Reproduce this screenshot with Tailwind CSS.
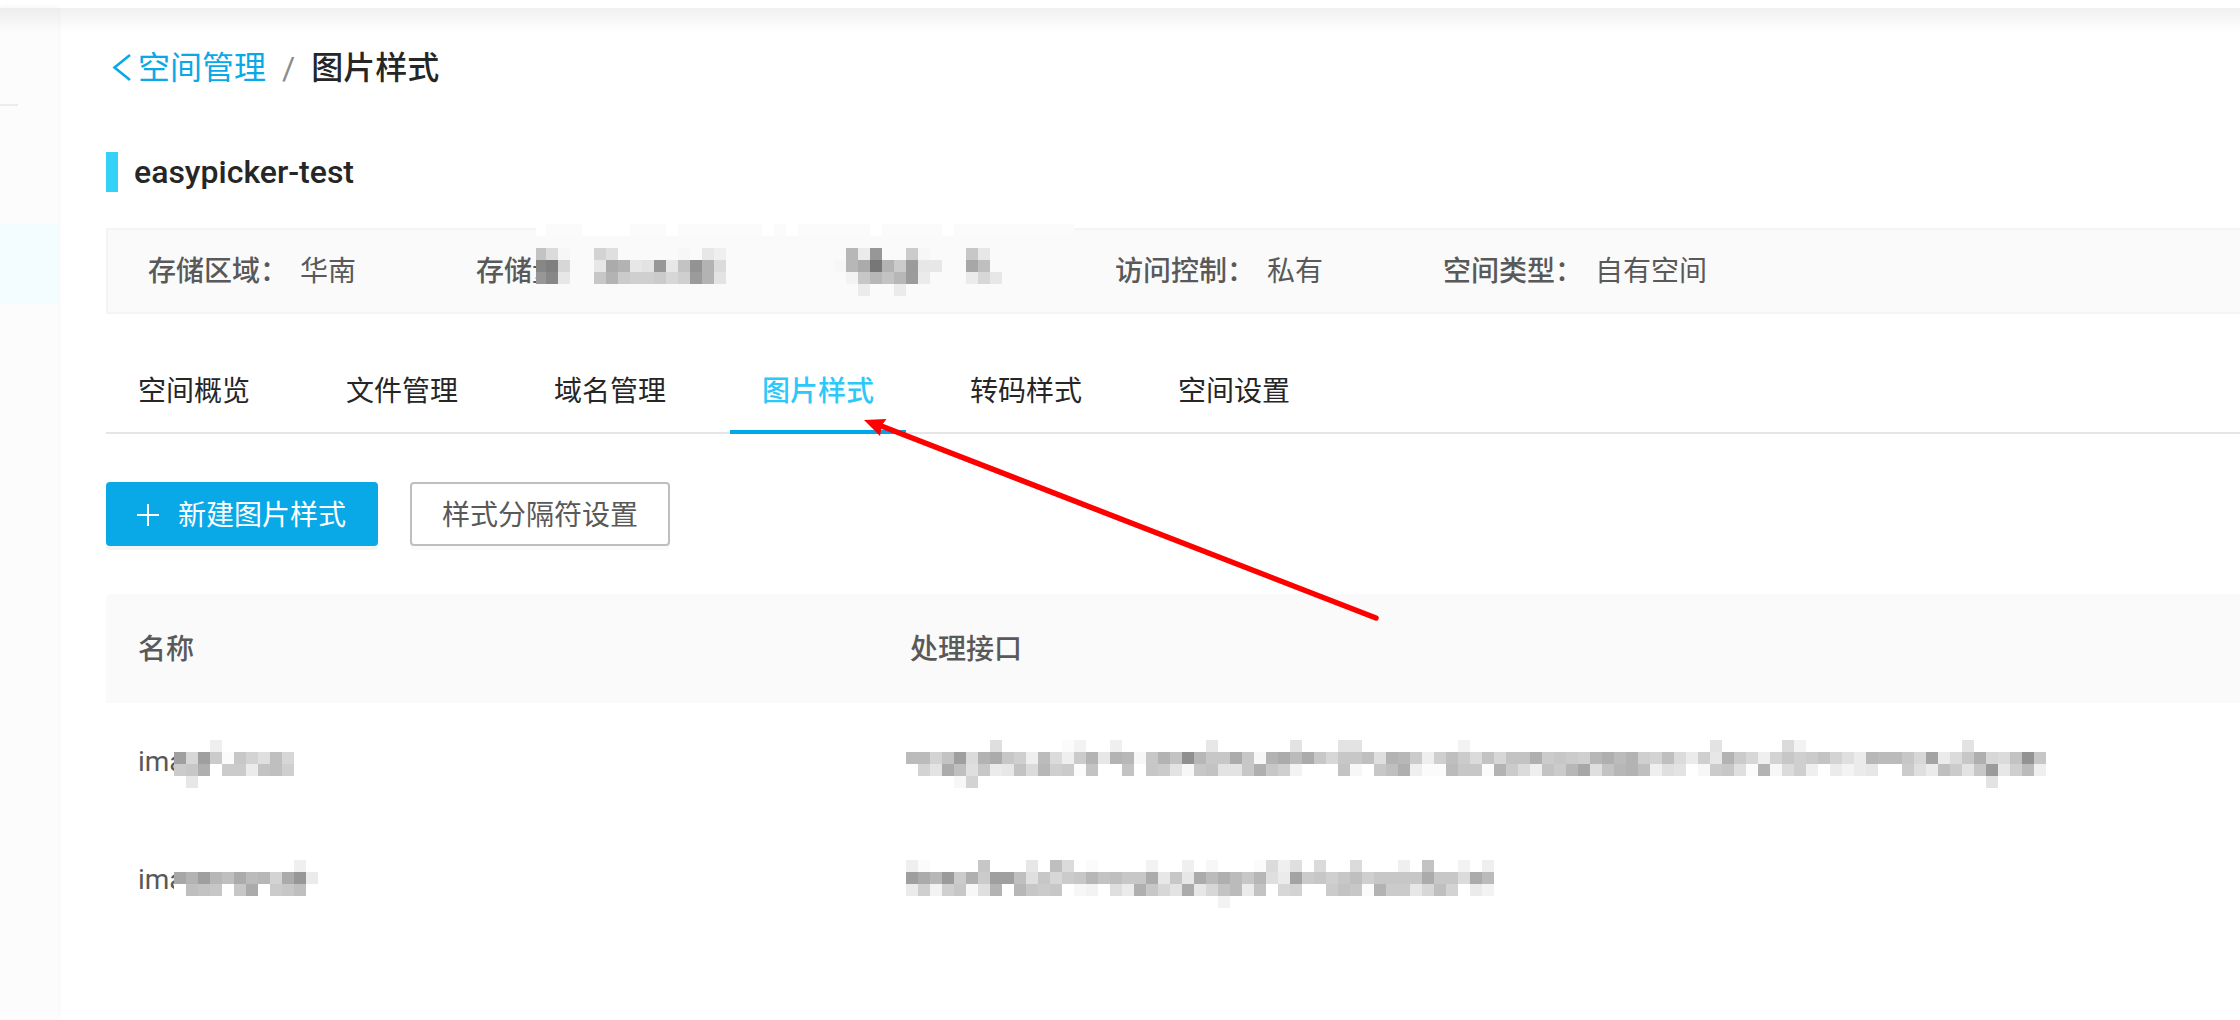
<!DOCTYPE html>
<html lang="zh-CN">
<head>
<meta charset="utf-8">
<meta name="viewport" content="width=device-width, initial-scale=1">
<title>空间管理 / 图片样式</title>
<script src="https://cdn.jsdelivr.net/npm/@tailwindcss/browser@4"></script>
</head>
<body class="relative flex min-h-screen flex-col overflow-x-hidden bg-white font-[Roboto,'Noto_Sans_CJK_SC',sans-serif] text-[28px] leading-[44px] text-[#595959]">

<header class="h-2 shrink-0 bg-white"></header>

<div class="relative flex grow">
  <!-- shadow cast by the top bar -->
  <div class="pointer-events-none absolute inset-x-0 top-0 z-10 h-6 bg-linear-to-b from-black/6 to-transparent"></div>

  <aside class="flex w-[58px] shrink-0 flex-col bg-[#fcfcfc] shadow-[0_0_6px_rgba(0,0,0,0.06)]">
    <hr class="mt-24 w-[18px] border-t-2 border-[#ececec]">
    <a href="#" aria-label="空间管理" class="mt-[118px] block h-20 bg-[#f3fcff]"></a>
  </aside>

  <main class="min-w-0 grow pt-9 pl-12">
    <nav aria-label="面包屑" class="flex items-center gap-4 text-[32px] leading-[48px]">
      <a href="#" class="flex items-center text-[#09a9e8]">
        <svg class="size-8" viewBox="0 0 32 32" fill="none" stroke="currentColor" stroke-width="2.6" aria-hidden="true"><path d="M24 3L8.500 15.500L24 28"/></svg>
        <span>空间管理</span>
      </a>
      <span class="text-[#8c8c8c]">/</span>
      <span class="font-medium text-[#262626]">图片样式</span>
    </nav>

    <div class="mt-[60px] flex h-10 items-center gap-4">
      <span class="h-10 w-3 bg-[#36d1f6]"></span>
      <h1 class="text-[32px] font-medium text-[#262626]">easypicker-test</h1>
    </div>

    <dl class="relative mt-9 flex h-[86px] items-center gap-[120px] border-2 border-r-0 border-[#f4f4f4] bg-[#fafafa] pt-0.5 pl-10 whitespace-nowrap">
      <div class="flex gap-3"><dt class="font-medium">存储区域：</dt><dd>华南</dd></div>
      <div class="w-[250px]"><dt class="w-[60px] overflow-hidden font-medium">存储量：</dt></div>
      <div class="w-[149px]"></div>
      <div class="flex gap-3"><dt class="font-medium">访问控制：</dt><dd>私有</dd></div>
      <div class="flex gap-3"><dt class="font-medium">空间类型：</dt><dd>自有空间</dd></div>
      <svg id="info-mask" class="absolute -top-[6px] left-[428px]" width="540" height="84" viewBox="2 0 540 84" shape-rendering="crispEdges" aria-hidden="true"></svg>
    </dl>

    <nav aria-label="空间" class="mt-8 flex h-[88px] gap-8 border-b-2 border-[#e6e6e6] text-[#262626]">
      <a href="#" class="px-8 pt-6">空间概览</a>
      <a href="#" class="px-8 pt-6">文件管理</a>
      <a href="#" class="px-8 pt-6">域名管理</a>
      <a href="#" aria-current="page" class="-mb-0.5 border-b-4 border-[#00a7e8] px-8 pt-6 font-medium text-[#2cc8fa]">图片样式</a>
      <a href="#" class="px-8 pt-6">转码样式</a>
      <a href="#" class="px-8 pt-6">空间设置</a>
    </nav>

    <div class="mt-12 flex gap-8">
      <button type="button" class="flex h-16 items-center gap-[18px] rounded bg-[#09a9e8] pr-8 pl-[30px] text-white shadow-[0_4px_0_rgba(0,0,0,0.045)]">
        <svg class="size-6" viewBox="0 0 24 24" fill="none" stroke="currentColor" stroke-width="2" aria-hidden="true"><path d="M12 2v22M1 13h22"/></svg>
        <span class="pt-1">新建图片样式</span>
      </button>
      <button type="button" class="flex h-16 items-center rounded border-2 border-[#bfbfbf] bg-white px-[30px] shadow-[0_4px_0_rgba(0,0,0,0.02)]"><span class="pt-1">样式分隔符设置</span></button>
    </div>

    <div class="relative mt-12">
      <table class="w-full table-fixed text-left">
        <colgroup><col class="w-[772px]"><col></colgroup>
        <thead>
          <tr class="h-[109px]">
            <th class="rounded-tl bg-[#fafafa] px-8 pt-0.5 font-medium">名称</th>
            <th class="bg-[#fafafa] px-8 pt-0.5 font-medium">处理接口</th>
          </tr>
        </thead>
        <tbody>
          <tr class="h-[118px]"><td class="px-8"><div class="w-9 overflow-hidden">ima</div></td><td></td></tr>
          <tr class="h-[118px]"><td class="px-8"><div class="w-9 overflow-hidden">ima</div></td><td></td></tr>
        </tbody>
      </table>
      <svg id="table-mask" class="absolute top-[146px] left-[68px]" width="1872" height="168" shape-rendering="crispEdges" aria-hidden="true"></svg>
    </div>
  </main>
</div>

<!-- arrow pointing at the current tab -->
<svg class="pointer-events-none absolute top-[410px] left-[856px] z-20" width="530" height="220" viewBox="856 410 530 220" aria-hidden="true">
  <path d="M880 425.500L1376 618" stroke="#fe0000" stroke-width="5.500" stroke-linecap="round" fill="none"/>
  <path d="M864 420L886.500 419L882 425L880 436Z" fill="#fe0000"/>
</svg>

<script>
// Mosaic over private values: [column, row, cells], one base-36 digit per 12px cell,
// darker as the digit grows; a dot is clear.
function mosaic(id, rows) {
  const svg = document.getElementById(id);
  for (const [col, row, cells] of rows) {
    [...cells].forEach((c, i) => {
      if (c === '.') return;
      const g = 255 - 4 * parseInt(c, 36);
      const r = document.createElementNS('http://www.w3.org/2000/svg', 'rect');
      r.setAttribute('x', (col + i) * 12);
      r.setAttribute('y', row * 12);
      r.setAttribute('width', 12);
      r.setAttribute('height', 12);
      r.setAttribute('fill', `rgb(${g},${g},${g})`);
      svg.appendChild(r);
    });
  }
}
mosaic('info-mask', [
  [0, 0, '011100001110111111101011111101111101111111111'],
  [0, 2, 'f92..b8.....2.64..........i5q..d2...e6'],
  [0, 3, 'uwa..6lj67q6frj9.........2ilyjdp66..mg'],
  [0, 4, 'qu6..ejdccdacpj7..........3eifip5...5a6'],
  [27, 5, '5..5']
]);
mosaic('table-mask', [
  [3, 0, '4'],
  [0, 1, 'oaod1eb8ga'],
  [0, 2, 'dek.dd5fgc'],
  [1, 3, '6'],
  [10, 10, '4'],
  [0, 11, 'mjoiglhiblq5'],
  [0, 12, '.gfe.el.deg'],
  [68, 0, '8.....13..4.......6......7...77........3'],
  [128, 0, '7.....93.............7'],
  [61, 1, 'hhbfo9jlec4h94dj6ji2ejfsieele2'],
  [91, 1, 'jlhleaeeg8jid4cgd9faffkdedcikh'],
  [121, 1, 'jcbg95c6jda4becdfb85ihhean59ek'],
  [151, 1, 'a9fre'],
  [61, 2, '.b7lg8e56f9icd1f..f.ed72ef77ek'],
  [91, 2, 'ec3...f2.egk411hee1jd94fdim8fi'],
  [121, 2, 'jg487.2de81j29c4.5356..d85gd7e'],
  [151, 2, 'p6ch4'],
  [65, 3, '2b'],
  [151, 3, '7'],
  [61, 10, '41....e...6.g9.1....3..4.2...1948.9..9...4.f..3.4'],
  [61, 11, 'olipdkdoog8eadeifgeel6e6lhkhei'],
  [91, 11, '85ndecegceeeelee9lh'],
  [61, 12, '5c3ce28j.iede.23.85kea7l6afh5f'],
  [91, 12, '.ab..dfe1jdd6agb.53'],
  [87, 13, '3']
]);
</script>
</body>
</html>
